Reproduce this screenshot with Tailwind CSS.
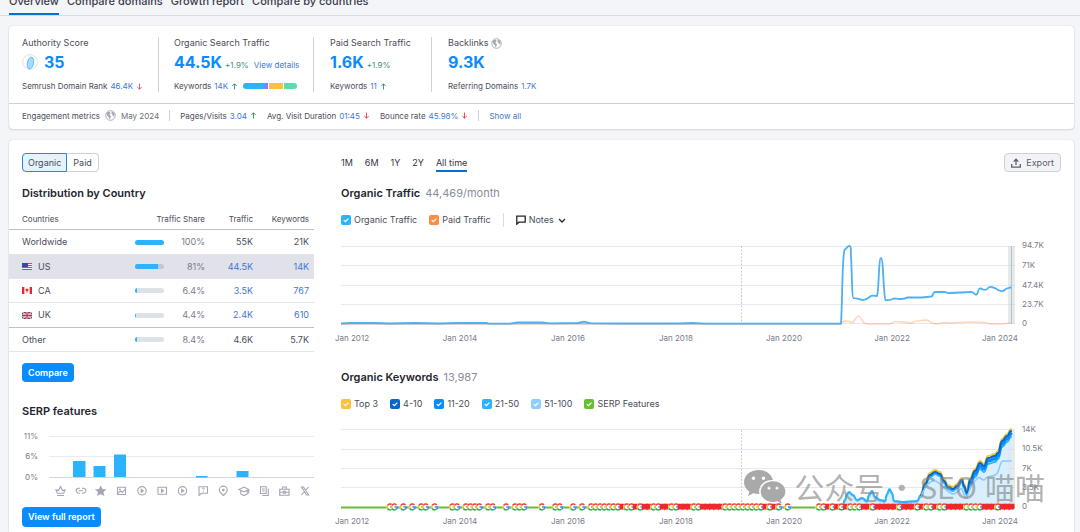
<!DOCTYPE html>
<html lang="en">
<head>
<meta charset="utf-8">
<meta name="viewport" content="width=device-width, initial-scale=1">
<title>Domain Overview</title>
<script src="https://cdn.jsdelivr.net/npm/@tailwindcss/browser@4"></script>
</head>
<body class="bg-[#f4f5f9] font-['Inter','Noto_Sans_CJK_SC',sans-serif] text-[#4a4d5a]">
<svg class="hidden">
  <symbol id="up" viewBox="0 0 8 8"><path d="M4 7.4V1M1.4 3.5 4 .9l2.6 2.6" fill="none" stroke="currentColor" stroke-width="1"/></symbol>
  <symbol id="down" viewBox="0 0 8 8"><path d="M4 .6V7M1.4 4.5 4 7.1l2.6-2.6" fill="none" stroke="currentColor" stroke-width="1"/></symbol>
  <symbol id="globe" viewBox="0 0 12 12"><circle cx="6" cy="6" r="5.2" fill="#fff" stroke="#a3a6b4" stroke-width="1"/><path d="M1.6 3.6 3.6 2l2 .4.6 1.2-1.4 1 .4 1.2 1.2.8-.2 1.8L5 10 4 7.600 2.200 6zM7.600 1.600l2 1.200 1 2-1.200 2.200-1-.8-.4-1.600-1-.4.2-1.400z" fill="#a3a6b4"/></symbol>
  <symbol id="tick" viewBox="0 0 10 10"><path d="M2.700 5.100 4.400 6.700 7.400 3.600" fill="none" stroke="#fff" stroke-width="1.300"/></symbol>
  <symbol id="g" viewBox="0 0 8 8" overflow="visible"><circle cx="4" cy="4" r="3.700" fill="#fff"/><g fill="none" stroke-width="1.500"><path d="M6.100 2A2.900 2.900 0 0 0 1.500 2.500" stroke="#ea4335"/><path d="M1.500 2.500A2.900 2.900 0 0 0 1.500 5.500" stroke="#fbbc05"/><path d="M1.500 5.500A2.900 2.900 0 0 0 5.800 6.250" stroke="#34a853"/><path d="M5.800 6.250A2.900 2.900 0 0 0 6.900 4.100H4.100" stroke="#4285f4"/></g></symbol>
  <symbol id="r" viewBox="0 0 8 8" overflow="visible"><path d="M1.200 .8H7.300L6.600 6.600H2.600L1.200 7.400z" fill="#f0282d"/></symbol>
</svg>

<div class="flex h-screen flex-col overflow-hidden">
  <nav class="flex h-4 shrink-0 items-end gap-2 border-b border-[#d9dbe3] pl-[9px] text-[11px] leading-4 font-medium text-[#3a3d4b]">
    <a href="#" class="border-b-2 border-[#0a6fd0] pb-1">Overview</a>
    <a href="#" class="border-b-2 border-transparent pb-1">Compare domains</a>
    <a href="#" class="border-b-2 border-transparent pb-1">Growth report</a>
    <a href="#" class="border-b-2 border-transparent pb-1">Compare by countries</a>
  </nav>

  <main class="flex flex-1 flex-col gap-[11px] pt-[10px] pr-[6px] pl-[9px]">
    <section class="rounded-[4px] bg-white shadow-[0_0_1px_rgba(25,27,35,0.25),0_1px_2px_rgba(25,27,35,0.12)]">
      <div class="flex pt-[11px] pb-[11px] pl-[13px] text-[8px]">
        <div class="w-[137px] border-r border-[#cfd1da]">
          <h2 class="text-[9px] leading-3">Authority Score</h2>
          <div class="mt-1 flex h-[18px] items-center gap-[6px]">
            <svg class="size-4" viewBox="0 0 16 16"><circle cx="8" cy="8" r="7.300" fill="#fff" stroke="#dfe1e9"/><ellipse cx="8.500" cy="9" rx="3.100" ry="6" transform="rotate(12 8.500 9)" fill="#a5dcfd" stroke="#46b3f7" stroke-width=".8"/></svg>
            <a href="#" class="text-[16px] leading-4 font-bold text-[#0a8cff]">35</a>
          </div>
          <p class="mt-[9px] flex h-3 items-center gap-[3px]">Semrush Domain Rank <a href="#" class="text-[#3f78d0]">46.4K</a><svg class="size-[7px] text-[#e0496a]"><use href="#down"/></svg></p>
        </div>
        <div class="ml-[15px] w-[140px] border-r border-[#cfd1da]">
          <h2 class="text-[9px] leading-3">Organic Search Traffic</h2>
          <div class="mt-1 flex h-[18px] items-baseline gap-[3px]">
            <a href="#" class="text-[16px] leading-[18px] font-bold text-[#0a8cff]">44.5K</a><span class="text-[#3f8f6c]">+1.9%</span><a href="#" class="ml-[2px] text-[#3f78d0]">View details</a>
          </div>
          <p class="mt-[9px] flex h-3 items-center gap-[3px]">Keywords <a href="#" class="text-[#3f78d0]">14K</a><svg class="size-[7px] text-[#2c8a63]"><use href="#up"/></svg>
            <span class="ml-[2px] flex h-[6px] w-[54px] overflow-hidden rounded-full"><i class="w-[22px] bg-[#2bb3ff]"></i><i class="w-[3px] bg-[#ab6cfe]"></i><i class="ml-px w-[14px] bg-[#fdc23c]"></i><i class="ml-px flex-1 bg-[#59ddaa]"></i></span></p>
        </div>
        <div class="ml-[16px] w-[102px] border-r border-[#cfd1da]">
          <h2 class="text-[9px] leading-3">Paid Search Traffic</h2>
          <div class="mt-1 flex h-[18px] items-baseline gap-[3px]">
            <a href="#" class="text-[16px] leading-[18px] font-bold text-[#0a8cff]">1.6K</a><span class="text-[#3f8f6c]">+1.9%</span>
          </div>
          <p class="mt-[9px] flex h-3 items-center gap-[3px]">Keywords <a href="#" class="text-[#3f78d0]">11</a><svg class="size-[7px] text-[#2c8a63]"><use href="#up"/></svg></p>
        </div>
        <div class="ml-[16px]">
          <h2 class="flex items-center gap-[3px] text-[9px] leading-3">Backlinks <svg class="size-[11px]"><use href="#globe"/></svg></h2>
          <a href="#" class="mt-1 block text-[16px] leading-[18px] font-bold text-[#0a8cff]">9.3K</a>
          <p class="mt-[9px] flex h-3 items-center gap-[3px]">Referring Domains <a href="#" class="text-[#3f78d0]">1.7K</a></p>
        </div>
      </div>
      <div class="flex h-[26px] items-center border-t border-[#cfd1da] pb-0.5 pl-[13px] text-[8px]">
        <span>Engagement metrics</span><svg class="ml-[5px] size-[11px]"><use href="#globe"/></svg>
        <span class="ml-[5px] text-[#6c6e79]">May 2024</span>
        <span class="ml-[10px] h-[11px] w-px bg-[#cfd1da]"></span>
        <span class="ml-[10px] flex items-center gap-[3px]">Pages/Visits <a href="#" class="text-[#3f78d0]">3.04</a><svg class="size-[7px] text-[#2c8a63]"><use href="#up"/></svg></span>
        <span class="ml-[10px] flex items-center gap-[3px]">Avg. Visit Duration <a href="#" class="text-[#3f78d0]">01:45</a><svg class="size-[7px] text-[#e0384f]"><use href="#down"/></svg></span>
        <span class="ml-[10px] flex items-center gap-[3px]">Bounce rate <a href="#" class="text-[#3f78d0]">45.98%</a><svg class="size-[7px] text-[#e0384f]"><use href="#down"/></svg></span>
        <span class="ml-[10px] h-[11px] w-px bg-[#cfd1da]"></span>
        <a href="#" class="ml-[10px] text-[#3f78d0]">Show all</a>
      </div>
    </section>

    <section class="relative flex flex-1 gap-[27px] rounded-t-[4px] bg-white pt-[13px] pr-[13px] shadow-[0_0_1px_rgba(25,27,35,0.25),0_1px_2px_rgba(25,27,35,0.12)]">
      <div class="w-[305px] shrink-0">
        <div class="ml-[13px] flex h-[19px] text-[9px]">
          <button class="rounded-l-[4px] border border-[#2a86d9] bg-[#e4f3fd] px-[5px]">Organic</button>
          <button class="rounded-r-[4px] border border-l-0 border-[#cfd1da] px-[6px]">Paid</button>
        </div>
        <h2 class="mt-[13px] ml-[13px] text-[11px] leading-4 font-semibold text-[#23252f]">Distribution by Country</h2>
        <table class="mt-2 w-full table-fixed border-separate border-spacing-0 text-right text-[9px] [&_td]:border-b [&_td]:border-[#e3e5ea] [&_td]:p-0">
          <colgroup><col class="w-[126px]"><col class="w-[30px]"><col class="w-[40px]"><col class="w-[48px]"><col></colgroup>
          <thead class="text-[8px]">
            <tr class="h-[21px] [&_th]:border-b [&_th]:border-[#bfc1cc] [&_th]:p-0 [&_th]:font-normal">
              <th class="pl-[13px]! text-left">Countries</th><th colspan="2">Traffic Share</th><th>Traffic</th><th class="pr-[5px]!">Keywords</th>
            </tr>
          </thead>
          <tbody>
            <tr class="h-[25px]"><td class="pl-[13px]! text-left">Worldwide</td><td><div class="h-[5px] w-[29px] rounded-full bg-[#2bb3ff]"></div></td><td class="text-[#797c8a]">100%</td><td>55K</td><td class="pr-[5px]!">21K</td></tr>
            <tr class="h-6 bg-[#e0e1e9]"><td class="pl-[13px]! text-left"><span class="flex items-center gap-[6px]"><svg class="h-[7px] w-[10px]" viewBox="0 0 10 7"><path fill="#f3f3f6" d="M0 0h10v7H0z"/><path stroke="#e0434c" d="M0 .5h10M0 2.500h10M0 4.500h10M0 6.500h10"/><path fill="#3b47a8" d="M0 0h6v4H0z"/></svg>US</span></td><td><div class="h-[5px] w-[29px] overflow-hidden rounded-full bg-[#c4c7cf]"><div class="h-full bg-[#2bb3ff]" style="width:81%"></div></div></td><td class="text-[#797c8a]">81%</td><td><a href="#" class="text-[#3f78d0]">44.5K</a></td><td class="pr-[5px]!"><a href="#" class="text-[#3f78d0]">14K</a></td></tr>
            <tr class="h-6"><td class="pl-[13px]! text-left"><span class="flex items-center gap-[6px]"><svg class="h-[7px] w-[10px]" viewBox="0 0 10 7"><path fill="#f6f6f8" d="M0 0h10v7H0z"/><path fill="#ea2430" d="M0 0h2.300v7H0zM7.700 0H10v7H7.700zM5 1l.6 1.200 1.200.2L6 4l-.8.5V6h-.4V4.500L4 4l-.8-1.600 1.200-.2z"/></svg>CA</span></td><td><div class="h-[5px] w-[29px] overflow-hidden rounded-full bg-[#dde2e6]"><div class="h-full bg-[#2bb3ff]" style="width:6.4%"></div></div></td><td class="text-[#797c8a]">6.4%</td><td><a href="#" class="text-[#3f78d0]">3.5K</a></td><td class="pr-[5px]!"><a href="#" class="text-[#3f78d0]">767</a></td></tr>
            <tr class="h-[25px] [&_td]:border-[#bcc2c9]!"><td class="pl-[13px]! text-left"><span class="flex items-center gap-[6px]"><svg class="h-[7px] w-[10px]" viewBox="0 0 10 7"><path fill="#2d3c86" d="M0 0h10v7H0z"/><path stroke="#fff" stroke-width="1.300" d="m0 0 10 7M10 0 0 7"/><path stroke="#d8293c" stroke-width=".5" d="m0 0 10 7M10 0 0 7"/><path stroke="#fff" stroke-width="2.400" d="M5 0v7M0 3.500h10"/><path stroke="#d8293c" stroke-width="1.300" d="M5 0v7M0 3.500h10"/></svg>UK</span></td><td><div class="h-[5px] w-[29px] overflow-hidden rounded-full bg-[#dde2e6]"><div class="h-full bg-[#2bb3ff]" style="width:4.4%"></div></div></td><td class="text-[#797c8a]">4.4%</td><td><a href="#" class="text-[#3f78d0]">2.4K</a></td><td class="pr-[5px]!"><a href="#" class="text-[#3f78d0]">610</a></td></tr>
            <tr class="h-6"><td class="pl-[13px]! text-left">Other</td><td><div class="h-[5px] w-[29px] overflow-hidden rounded-full bg-[#dde2e6]"><div class="h-full bg-[#2bb3ff]" style="width:8.4%"></div></div></td><td class="text-[#797c8a]">8.4%</td><td>4.6K</td><td class="pr-[5px]!">5.7K</td></tr>
          </tbody>
        </table>
        <button class="mt-[11px] ml-[13px] block h-[19px] rounded-[4px] bg-[#0a8cff] px-[6px] text-[9px] font-semibold text-white">Compare</button>
        <h2 class="mt-[21px] ml-[13px] text-[11px] leading-4 font-semibold text-[#23252f]">SERP features</h2>
        <svg class="mt-[9px] block w-full" viewBox="9 428 305 72" font-size="8" fill="none">
          <path d="M49 436.500H314M49 456.500H314" stroke="#e9ebf1"/><path d="M49 477.500H314" stroke="#d3d5df"/>
          <g fill="#797c8a" text-anchor="end"><text x="38" y="439">11%</text><text x="38" y="459">6%</text><text x="38" y="480">0%</text></g>
          <path fill="#2bb3ff" d="M73 477v-15.500q0-.5.500-.5h11.500q.5 0 .5.500V477zM93.500 477v-11h12v11zM114 477v-22.500h12V477zM196 477.500v-1.500h11.500v1.500zM236.500 477v-6h12v6z"/>
          <g stroke="#a3a6b4" stroke-width="1.100">
            <path d="M56 489.800 58.500 490.500 60.500 486.500 62.500 490.500 65 489.800 63.700 493.300H57.300zM57 495.500H64"/>
            <path d="M80 488.200H78.700a2.500 2.500 0 0 0 0 5H80M82 488.200H83.300a2.500 2.500 0 0 1 0 5H82M78.700 490.700H83.300"/>
            <path fill="#a3a6b4" d="m100.700 486.600 1.300 2.900 3.200.3-2.400 2.100.7 3.100-2.800-1.600-2.800 1.600.7-3.100-2.400-2.100 3.200-.3z"/>
            <path d="M117.500 487.200h8v7.300h-8zM118 493.500l2.500-2.700 1.700 1.700 3-3.200"/><circle cx="119.800" cy="489.400" r=".4"/>
            <circle cx="142" cy="490.800" r="4.200"/><path fill="#a3a6b4" d="m141.200 489.400 2 1.400-2 1.400z"/>
            <path d="M158 487.300h8.500v7h-8.500z"/><path fill="#a3a6b4" d="m161.500 489.400 2 1.400-2 1.400z"/>
            <circle cx="182.500" cy="490.800" r="4.200"/><path fill="#a3a6b4" d="m181.700 489.400 2 1.400-2 1.400z"/>
            <path d="M199 486.700h8.500v6.600h-6l-2.500 2z"/><path d="M202.200 488.900q.2-1 1.100-1t1 .9q0 .6-1 1.200M203.300 491v.8" stroke-width=".9"/>
            <path d="M223.300 495.500q-4-3-4-5.400a4 4 0 0 1 8 0q0 2.400-4 5.400z"/><circle cx="223.300" cy="490" r=".8" fill="#a3a6b4"/>
            <path d="m239 489.500 5-2.500 4.700 2.500-4.700 2.500zM240.800 490.700v3.200l3.200 1.700 3.200-1.700v-3.200M248.700 489.500v4"/>
            <path d="M260.500 486.700h5.700v6.800h-5.700zM262 489h2.700M262 491h2.700M268.300 488.500v7h-6"/>
            <path d="M279.700 489.300h9.300v6h-9.300zM282.500 489v-2h3.700v2M279.700 492.200h3.500M285.500 492.200h3.500M283.500 491.400h1.800v1.700h-1.800z"/>
            <path d="M301.500 487h2l5.200 8h-2zM308.500 487l-3 3.400M304.500 491.500l-3.200 3.500"/>
          </g>
        </svg>
        <button class="mt-[7px] ml-[13px] block h-5 rounded-[4px] bg-[#0a8cff] px-[6px] text-[9px] font-semibold text-white">View full report</button>
      </div>

      <div class="min-w-0 flex-1">
        <div class="flex h-[19px] items-center text-[9px]">
          <div class="flex h-full gap-3 text-[#33353f]">
            <button>1M</button><button>6M</button><button>1Y</button><button>2Y</button><button class="border-y-2 border-t-transparent border-b-[#0a6fd0]">All time</button>
          </div>
          <button class="ml-auto flex h-full items-center gap-[5px] rounded-[4px] border border-[#cfd1da] bg-[#f2f3f6] px-[6px] text-[#5b5e6b]"><svg class="size-[10px]" viewBox="0 0 10 10"><path d="M.7 6v3.200h8.600V6M5 7V1.500M2.700 3.600 5 1.200l2.300 2.400" fill="none" stroke="#5b5e6b" stroke-width="1.300"/></svg>Export</button>
        </div>
        <h2 class="mt-[13px] flex items-center gap-[5px] text-[11px] leading-4 font-semibold text-[#23252f]">Organic Traffic <span class="font-normal text-[#8a8d9b]">44,469/month</span></h2>
        <div class="mt-[11px] flex h-4 items-center gap-3 text-[9px]">
          <label class="flex items-center gap-[3px]"><span class="grid"><input type="checkbox" checked class="size-[10px] appearance-none rounded-[2px] bg-[#2bb3ff] [grid-area:1/1]"><svg class="pointer-events-none size-[10px] [grid-area:1/1]"><use href="#tick"/></svg></span>Organic Traffic</label>
          <label class="flex items-center gap-[3px]"><span class="grid"><input type="checkbox" checked class="size-[10px] appearance-none rounded-[2px] bg-[#ff8c43] [grid-area:1/1]"><svg class="pointer-events-none size-[10px] [grid-area:1/1]"><use href="#tick"/></svg></span>Paid Traffic</label>
          <span class="h-[14px] w-px bg-[#dcdee5]"></span>
          <button class="flex items-center gap-[3px]"><svg class="size-[10px]" viewBox="0 0 10 10"><path d="M.8 1.200h8.400v6H2.900L.8 9.200z" fill="none" stroke="#23252f" stroke-width="1.300"/></svg>Notes<svg class="ml-px size-[8px]" viewBox="0 0 8 8"><path d="m1 3 3 3 3-3" fill="none" stroke="#23252f" stroke-width="1.300"/></svg></button>
        </div>
        <svg class="mt-[8px] block w-full overflow-visible" viewBox="341 236 720 112" font-size="8" fill="none">
          <path d="M341 246.500H1015M341 265.500H1015M341 285.500H1015M341 304.500H1015M341 323.500H1015" stroke="#e6e9f0"/>
          <path d="M741.500 246V323" stroke="#c9ccd6" stroke-dasharray="2 1.500"/>
          <path d="M1008 246h7v78h-7z" fill="#c5d0d2" fill-opacity=".45"/><path d="M1011.500 246V324" stroke="#b5c2c4"/>
          <path d="M341 324H841C843 320 848 321 850 322C855 325 855 316 858.300 316C862 316 861 324 868 324H889C892 324 892 321 896 321.500L908 322.500C913 325 913 321 917 321L926 320C931 320 928 324 937 324L945 322.500 950 323 970 322 985 322.500 990 324H1000L1011 323" stroke="#ff8c43" stroke-opacity=".35" stroke-width="1.600"/>
          <path d="M341 323.500 350 323H375L390 323.500 415 323 440 323.500 458 322.800 486 323 489 323.700H510L518 322.500H542L550 323.300 578 323 584 321.700 590 323.200 620 323.500H680L692 323 705 323.600H841C842.500 300 842 258 844.500 250C846 248 846.500 248.500 848 246.500C852 244 850.500 251 851 256C852 275 852 298 853.500 298C857 299 859 298 862 300C866 300.500 867 299 870 296.500C872 295 875 296 877 296C879 291 878.500 258 881 258C883.500 258 883.500 298 885.500 300C889 300.500 891 300 894 298.500C899 299 904 300 907 297.500H922L931 296.500C934 296 932 292.500 935 292H944C947 292 946 293.500 950 293L972 292C975 293 975 296 977 294C979 291 978 288 980.500 288.500C983 289 985 292 988 288C990 285 994 288 996 288.500C998 291 1003 291.500 1004 290.500C1007 287.500 1009 288 1011.500 287.500" stroke="#4db0f5" stroke-width="1.800" stroke-linejoin="round"/>
          <path d="M341 323.800H841" stroke="#7d9fc0" stroke-opacity=".7"/>
          <g fill="#797c8a"><text x="1022" y="248">94.7K</text><text x="1022" y="268">71K</text><text x="1022" y="287.500">47.4K</text><text x="1022" y="307">23.7K</text><text x="1022" y="326">0</text></g>
          <g fill="#797c8a" text-anchor="middle"><text x="352" y="340.500">Jan 2012</text><text x="460" y="340.500">Jan 2014</text><text x="568" y="340.500">Jan 2016</text><text x="676" y="340.500">Jan 2018</text><text x="784" y="340.500">Jan 2020</text><text x="892" y="340.500">Jan 2022</text><text x="1000" y="340.500">Jan 2024</text></g>
        </svg>
        <h2 class="mt-[21px] flex items-center gap-[5px] text-[11px] leading-4 font-semibold text-[#23252f]">Organic Keywords <span class="font-normal text-[#8a8d9b]">13,987</span></h2>
        <div class="mt-[11px] flex h-4 items-center gap-3 text-[9px]">
          <label class="flex items-center gap-[3px]"><span class="grid"><input type="checkbox" checked class="size-[10px] appearance-none rounded-[2px] bg-[#fdc23c] [grid-area:1/1]"><svg class="pointer-events-none size-[10px] [grid-area:1/1]"><use href="#tick"/></svg></span>Top 3</label>
          <label class="flex items-center gap-[3px]"><span class="grid"><input type="checkbox" checked class="size-[10px] appearance-none rounded-[2px] bg-[#0667c6] [grid-area:1/1]"><svg class="pointer-events-none size-[10px] [grid-area:1/1]"><use href="#tick"/></svg></span>4-10</label>
          <label class="flex items-center gap-[3px]"><span class="grid"><input type="checkbox" checked class="size-[10px] appearance-none rounded-[2px] bg-[#0a8cff] [grid-area:1/1]"><svg class="pointer-events-none size-[10px] [grid-area:1/1]"><use href="#tick"/></svg></span>11-20</label>
          <label class="flex items-center gap-[3px]"><span class="grid"><input type="checkbox" checked class="size-[10px] appearance-none rounded-[2px] bg-[#2bb3ff] [grid-area:1/1]"><svg class="pointer-events-none size-[10px] [grid-area:1/1]"><use href="#tick"/></svg></span>21-50</label>
          <label class="flex items-center gap-[3px]"><span class="grid"><input type="checkbox" checked class="size-[10px] appearance-none rounded-[2px] bg-[#8ecdff] [grid-area:1/1]"><svg class="pointer-events-none size-[10px] [grid-area:1/1]"><use href="#tick"/></svg></span>51-100</label>
          <label class="flex items-center gap-[3px]"><span class="grid"><input type="checkbox" checked class="size-[10px] appearance-none rounded-[2px] bg-[#66c02f] [grid-area:1/1]"><svg class="pointer-events-none size-[10px] [grid-area:1/1]"><use href="#tick"/></svg></span>SERP Features</label>
        </div>
        <div class="relative mt-[8px]">
          <svg class="block w-full overflow-visible" viewBox="341 420 720 112" font-size="8" fill="none">
            <path d="M341 429.500H1015M341 449.500H1015M341 468.500H1015M341 487.500H1015" stroke="#e6e9f0"/>
            <path d="M741.500 430V507" stroke="#c9ccd6" stroke-dasharray="2 1.500"/>
            <path d="M1008 430h7v77h-7z" fill="#c5d0d2" fill-opacity=".45"/>
            <path id="area" fill="#d3ecfd" fill-opacity=".85"/>
            <g stroke-linejoin="round" stroke-linecap="round">
              <path class="series" stroke="#8ecdff" stroke-width="2" transform="translate(0 2)"/>
              <path class="series" stroke="#2bb3ff" stroke-width="2" transform="translate(0 1)"/>
              <path class="top" stroke="#2bb3ff" stroke-width="2" transform="translate(0 3)"/>
              <path class="tail" stroke="#2bb3ff" stroke-width="2" transform="translate(0 7)"/>
              <path class="tail" stroke="#0a8cff" stroke-width="3" transform="translate(0 4)"/>
              <path class="top" stroke="#fdc23c" stroke-width="2" transform="translate(0 -1)"/>
              <path class="top" stroke="#0667c6" stroke-width="2" transform="translate(0 1)"/>
              <path d="M921 497C924 488 928 483 932 481Q936 480 940 484C945 488 948 493 953 494C958 494 960 487 962 489Q965 499 967 498C969 490 973 482 978 478 980 476 982 481 984 480 987 476 990 477 995 475 1000 474 999 461 1003 461H1011" stroke="#8cc8fb" stroke-width="1.500"/>
            </g>
            <path d="M341 507.500H1015" stroke="#68ba3c" stroke-width="2"/>
            <g id="markers"></g>
            <g fill="#797c8a"><text x="1022" y="432">14K</text><text x="1022" y="451">10.5K</text><text x="1022" y="471">7K</text><text x="1022" y="490">3.5K</text><text x="1022" y="509">0</text></g>
            <g fill="#797c8a" text-anchor="middle"><text x="352" y="524">Jan 2012</text><text x="460" y="524">Jan 2014</text><text x="568" y="524">Jan 2016</text><text x="676" y="524">Jan 2018</text><text x="784" y="524">Jan 2020</text><text x="892" y="524">Jan 2022</text><text x="1000" y="524">Jan 2024</text></g>
          </svg>
          <div class="pointer-events-none absolute top-[48px] right-[16px] flex items-center gap-2 text-[#808080]/60">
            <svg class="h-9 w-[42px]" viewBox="0 -2 42 36"><path fill="#a9a9a9" fill-rule="evenodd" d="M14.500 0C6.500 0 0 5.400 0 12.200c0 3.900 2.100 7.200 5.500 9.500L4 26l5.200-2.700c2 .6 4.300.9 6.300.8-2-7.500 4-14.300 13.400-14.100C27.500 4.200 21.500 0 14.500 0zM9.500 6.500a1.800 1.800 0 1 1 0 3.600 1.800 1.800 0 0 1 0-3.600zm10 0a1.800 1.800 0 1 1 0 3.600 1.800 1.800 0 0 1 0-3.600z"/><path fill="#a9a9a9" fill-rule="evenodd" d="M29 11.200c-7 0-12.300 4.600-12.300 10.300S22 32 29 32c1.500 0 3-.3 4.400-.7l4.300 2.300-1.200-3.700c3-2 4.900-5 4.900-8.400 0-5.700-5.500-10.300-12.400-10.300zm-4 5.300a1.500 1.500 0 1 1 0 3 1.500 1.500 0 0 1 0-3zm8 0a1.500 1.500 0 1 1 0 3 1.500 1.500 0 0 1 0-3z"/></svg>
            <span class="flex font-['Noto_Sans_CJK_SC',sans-serif] text-[30px] leading-9 whitespace-nowrap" lang="zh"><span>公众号</span><span class="w-[35px] text-center">·</span><span>SEO</span><span class="ml-2">喵喵</span></span>
          </div>
        </div>
      </div>
    </section>
  </main>
</div>

<script>
  // Keyword totals by month, as chart points
  const pts = [[842,506],[845,499],[847,493],[849,491],[853,494],[857,499],[862,497],[867,500],[869,494],[872,490],[875,496],[880,499],[885,500],[887,493],[889.5,488],[892,492],[894,500],[903,501],[917,500],[921,494],[925,483],[930,474],[935,471],[940,473],[944,480],[948,486],[953,488],[957,485],[962,479],[964,485],[967,492],[970,479],[975,470],[980,462],[984,465],[988,457],[995,455],[998,452],[1002,440],[1007,435],[1011,430]];
  const line = p => p.map((q, i) => {
    if (!i) return 'M' + q;
    const m = (p[i - 1][0] + q[0]) / 2;
    return `C${m} ${p[i - 1][1]} ${m} ${q[1]} ${q}`;
  }).join('');
  document.querySelectorAll('.series').forEach(e => e.setAttribute('d', line(pts)));
  document.querySelectorAll('.top').forEach(e => e.setAttribute('d', line(pts.slice(19))));
  document.querySelectorAll('.tail').forEach(e => e.setAttribute('d', line(pts.slice(31))));
  document.getElementById('area').setAttribute('d', line(pts) + 'V507H842z');

  // Monthly notes: G = Google update, R = flag, - = none
  const notes = 'GG-G-G-GG-G---GG-GGGG-GG--G-GGG---G--GG--G-G-GGGGGGGRGGRGRRGGRRGGRRRGGRRRRRGGGGGGGGGRGRG-G------GGRGRGRGGGRRGRRRRRGRRRGRGGRGGRRRRGGGGRRRGRRR';
  document.getElementById('markers').innerHTML = [...notes].map((c, i) =>
    c === '-' ? '' : `<use href="#${c.toLowerCase()}" x="${386 + i * 4.47}" y="503" width="8" height="8"/>`).join('');
</script>
</body>
</html>
